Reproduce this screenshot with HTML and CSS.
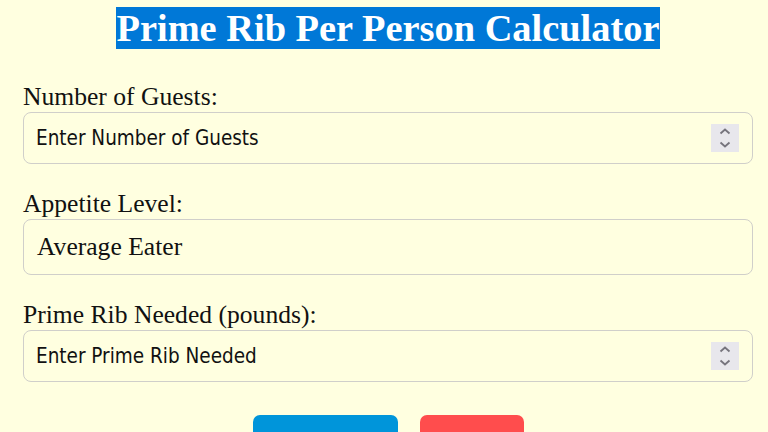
FILE: index.html
```html
<!DOCTYPE html>
<html lang="en">
<head>
<meta charset="utf-8">
<title>Prime Rib Per Person Calculator</title>
<link rel="stylesheet" href="styles.css">
</head>
<body>
<div class="page">
  <h1 class="title"><span class="title-text">Prime Rib Per Person Calculator</span></h1>
  <div class="form">
    <div class="group">
      <label class="label">Number of Guests:</label>
      <div class="field">
        <span class="field-text">Enter Number of Guests</span>
        <span class="spin"><svg width="28" height="28" viewBox="0 0 28 28"><path d="M9.5 9.5 L14 5.5 L18.5 9.5" fill="none" stroke="#76747d" stroke-width="1.8"/><path d="M9.5 18.5 L14 22.5 L18.5 18.5" fill="none" stroke="#76747d" stroke-width="1.8"/></svg></span>
      </div>
    </div>
    <div class="group">
      <label class="label">Appetite Level:</label>
      <div class="field field-select">
        <span class="select-text">Average Eater</span>
      </div>
    </div>
    <div class="group group-last">
      <label class="label">Prime Rib Needed (pounds):</label>
      <div class="field">
        <span class="field-text">Enter Prime Rib Needed</span>
        <span class="spin"><svg width="28" height="28" viewBox="0 0 28 28"><path d="M9.5 9.5 L14 5.5 L18.5 9.5" fill="none" stroke="#76747d" stroke-width="1.8"/><path d="M9.5 18.5 L14 22.5 L18.5 18.5" fill="none" stroke="#76747d" stroke-width="1.8"/></svg></span>
      </div>
    </div>
    <div class="buttons">
      <button class="btn btn-calc">Calculate</button>
      <button class="btn btn-reset">Reset</button>
    </div>
  </div>
</div>
</body>
</html>
```
FILE: styles.css
```css
html, body {
  margin: 0;
  padding: 0;
  background: #ffffe0;
}
body {
  font-family: "Liberation Serif", "Times New Roman", serif;
  color: #111;
  overflow: hidden;
}
.page {
  padding: 7px 15px 0 23px;
}
.title {
  margin: 0;
  text-align: center;
  font-family: "Liberation Serif", "Times New Roman", serif;
  font-weight: bold;
  font-size: 38.4px;
  line-height: 42px;
}
.title-text {
  background: #0078d7;
  color: #ffffff;
}
.form {
  margin-top: 32px;
}
.group {
  margin-bottom: 24px;
}
.group-last {
  margin-bottom: 0;
}
.label {
  display: block;
  font-size: 25.6px;
  line-height: 31px;
  color: #111;
}
.field {
  box-sizing: border-box;
  height: 52px;
  border: 1.5px solid #d0cfca;
  border-radius: 8px;
  display: flex;
  align-items: center;
  justify-content: space-between;
  padding: 0 13px 0 12px;
}
.field-select {
  height: 56px;
}
.field-text {
  font-family: "DejaVu Sans Condensed", "DejaVu Sans", sans-serif;
  font-size: 20.5px;
  color: #111;
}
.select-text {
  font-family: "Liberation Serif", "Times New Roman", serif;
  font-size: 25.6px;
  color: #111;
  padding-left: 1px;
}
.spin {
  width: 28px;
  height: 28px;
  background: #e8e7ec;
  display: flex;
}
.buttons {
  display: flex;
  justify-content: center;
  gap: 22px;
  margin-top: 33px;
}
.btn {
  box-sizing: border-box;
  height: 52px;
  border: none;
  border-radius: 7px;
  color: #fff;
  font-family: "DejaVu Sans Condensed", "DejaVu Sans", sans-serif;
  font-size: 20px;
  padding: 0;
}
.btn-calc {
  width: 145px;
  background: #0095da;
}
.btn-reset {
  width: 104px;
  background: #ff4d4d;
}
```
